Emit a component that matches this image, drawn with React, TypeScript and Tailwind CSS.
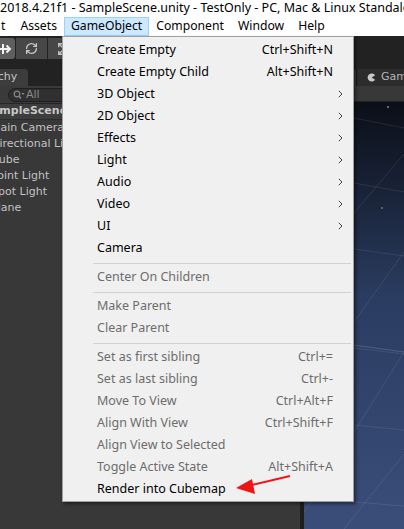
import React from 'react';
import { RefreshCw, Expand } from 'lucide-react';

type Entry = { label: string; shortcut?: string; sub?: boolean; disabled?: boolean } | 'sep';

const menu: Entry[] = [
  { label: 'Create Empty', shortcut: 'Ctrl+Shift+N' },
  { label: 'Create Empty Child', shortcut: 'Alt+Shift+N' },
  { label: '3D Object', sub: true },
  { label: '2D Object', sub: true },
  { label: 'Effects', sub: true },
  { label: 'Light', sub: true },
  { label: 'Audio', sub: true },
  { label: 'Video', sub: true },
  { label: 'UI', sub: true },
  { label: 'Camera' },
  'sep',
  { label: 'Center On Children', disabled: true },
  'sep',
  { label: 'Make Parent', disabled: true },
  { label: 'Clear Parent', disabled: true },
  'sep',
  { label: 'Set as first sibling', shortcut: 'Ctrl+=', disabled: true },
  { label: 'Set as last sibling', shortcut: 'Ctrl+-', disabled: true },
  { label: 'Move To View', shortcut: 'Ctrl+Alt+F', disabled: true },
  { label: 'Align With View', shortcut: 'Ctrl+Shift+F', disabled: true },
  { label: 'Align View to Selected', disabled: true },
  { label: 'Toggle Active State', shortcut: 'Alt+Shift+A', disabled: true },
  { label: 'Render into Cubemap' },
];

const children = ['Main Camera', 'Directional Light', 'Cube', 'Point Light', 'Spot Light', 'Plane'];

function Chevron() {
  return (
    <svg width="5" height="8" viewBox="0 0 5 8" className="block">
      <path d="M0.8 0.8 L4 4 L0.8 7.2" fill="none" stroke="#444" strokeWidth="1" />
    </svg>
  );
}

function GameIcon() {
  return (
    <svg width="9" height="9" viewBox="0 0 10 10" className="block shrink-0">
      <path d="M9 2.6 A4.5 4.5 0 1 0 9 7.4 L5.2 5 Z" fill="#c8c8c8" />
    </svg>
  );
}

function MoveIcon() {
  return (
    <svg width="18" height="14" viewBox="0 0 18 14" className="block">
      <path d="M2 7 H16 M12.5 3.5 L16 7 L12.5 10.5 M9 2 V12" fill="none" stroke="#f2f2f2" strokeWidth="2" />
    </svg>
  );
}

function SceneGrid() {
  return (
    <svg width="100" height="427" viewBox="0 0 100 427" className="block">
      <g stroke="#ffffff" strokeOpacity="0.09" strokeWidth="1" fill="none">
        <line x1="0" y1="6" x2="100" y2="26" />
        <line x1="0" y1="72" x2="100" y2="90" />
        <line x1="0" y1="140" x2="100" y2="154" />
        <line x1="0" y1="240" x2="100" y2="252" />
        <line x1="0" y1="318" x2="100" y2="328" />
        <line x1="0" y1="396" x2="100" y2="404" />
        <line x1="0" y1="170" x2="100" y2="52" />
        <line x1="0" y1="290" x2="100" y2="150" />
        <line x1="0" y1="410" x2="100" y2="250" />
        <line x1="40" y1="427" x2="100" y2="352" />
      </g>
      <line x1="49" y1="243" x2="100" y2="250" stroke="#ffffff" strokeOpacity="0.16" />
      <circle cx="84" cy="5" r="1" fill="#ffffff" fillOpacity="0.5" />
      <circle cx="78" cy="106" r="1" fill="#ffffff" fillOpacity="0.35" />
    </svg>
  );
}

export default function App() {
  const sys = { fontFamily: '"Noto Sans", "Open Sans", sans-serif' };
  const uni = { fontFamily: '"DejaVu Sans", Verdana, sans-serif' };
  return (
    <div className="relative w-[404px] h-[529px] overflow-hidden bg-[#383838]">
      {/* Title bar */}
      <div className="h-[16px] bg-white text-[12.5px] leading-[15px] text-black whitespace-nowrap overflow-hidden" style={sys}>
        2018.4.21f1 - SampleScene.unity - TestOnly - PC, Mac &amp; Linux Standalone
      </div>
      {/* Menu bar */}
      <div className="h-[20px] bg-white flex items-end text-[12.2px] text-black whitespace-nowrap" style={sys}>
        <div className="h-[19px] flex items-center pr-[7px] border border-transparent">t</div>
        <div className="h-[19px] flex items-center px-[6px] border border-transparent">Assets</div>
        <div className="h-[19px] flex items-center px-[6px] border border-[#99d1ff] bg-[#cce8ff]">GameObject</div>
        <div className="h-[19px] flex items-center px-[6px] border border-transparent">Component</div>
        <div className="h-[19px] flex items-center px-[6px] border border-transparent">Window</div>
        <div className="h-[19px] flex items-center px-[6px] border border-transparent">Help</div>
      </div>
      {/* Unity toolbar */}
      <div className="h-[27px] bg-[#222222] flex items-start pt-[2px]">
        <div className="flex gap-[1px] ml-[-17px]">
          <div className="w-[32px] h-[21px] bg-[#5e5e5e] rounded-[3px] flex items-center justify-center pl-[8px]">
            <MoveIcon />
          </div>
          <div className="w-[31px] h-[21px] bg-[#474747] flex items-center justify-center">
            <RefreshCw size={13} color="#c8c8c8" strokeWidth={2.4} />
          </div>
          <div className="w-[32px] h-[21px] bg-[#474747] flex items-center justify-center">
            <Expand size={14} color="#c8c8c8" strokeWidth={2.2} />
          </div>
        </div>
      </div>
      {/* Main area */}
      <div className="flex h-[466px]">
        {/* Hierarchy */}
        <div className="w-[300px] shrink-0 flex flex-col overflow-hidden bg-[#383838]" style={uni}>
          <div className="h-[23px] bg-[#222222] flex items-end">
            <div className="w-[28px] h-[17px] bg-[#3c3c3c] rounded-tr-[3px] overflow-hidden flex items-center">
              <span className="ml-[-36px] text-[11px] text-[#c4c4c4] whitespace-nowrap">Hierarchy</span>
            </div>
          </div>
          <div className="h-[18px] bg-[#3a3a3a] border-b border-[#262626] flex items-center pl-[8px]">
            <div className="h-[14px] w-[280px] rounded-full border border-[#1f1f1f] bg-[#303030] flex items-center pl-[4px] gap-[1px]">
              <svg width="12" height="10" viewBox="0 0 12 10" className="block">
                <circle cx="4" cy="4" r="2.8" fill="none" stroke="#8a8a8a" strokeWidth="1.2" />
                <line x1="6" y1="6" x2="8" y2="8.5" stroke="#8a8a8a" strokeWidth="1.3" />
                <path d="M8.5 3 L11.5 3 L10 5 Z" fill="#8a8a8a" />
              </svg>
              <span className="text-[11px] leading-none text-[#8c8c8c]">All</span>
            </div>
          </div>
          <div className="h-[16px] bg-[#3d3d3d] border-b border-[#2c2c2c] flex items-center whitespace-nowrap">
            <span className="ml-[-16px] text-[11px] font-bold text-[#c8c8c8]">SampleScene</span>
          </div>
          {children.map((c) => (
            <div key={c} className="h-[16px] flex items-center whitespace-nowrap">
              <span className="ml-[-9px] text-[11px] text-[#c2c2c2]">{c}</span>
            </div>
          ))}
        </div>
        <div className="w-[4px] shrink-0 bg-[#1e1e1e]" />
        {/* Scene view */}
        <div className="flex-1 min-w-0 flex flex-col overflow-hidden">
          <div className="h-[23px] bg-[#222222] flex items-end" style={uni}>
            <div className="w-[52px] shrink-0 h-[17px] bg-[#3c3c3c] rounded-t-[3px]" />
            <div className="w-[1px] shrink-0 h-[17px] bg-[#161616]" />
            <div className="flex-1 min-w-0 h-[17px] bg-[#2c2c2c] flex items-center pl-[10px] gap-[5px] whitespace-nowrap overflow-hidden">
              <GameIcon />
              <span className="text-[11px] text-[#b4b4b4]">Game</span>
            </div>
          </div>
          <div className="h-[16px] bg-[#383838] border-b border-[#222]" />
          <div className="flex-1 overflow-hidden bg-linear-to-b from-[#0b0f18] via-[#2a3c60] via-45% to-[#3b4e7a]">
            <SceneGrid />
          </div>
        </div>
      </div>

      {/* GameObject dropdown */}
      <div
        className="absolute left-[62px] top-[36px] w-[292px] bg-[#f0f0f0] border border-[#a0a0a0] pt-[2px] pb-[1px] shadow-[2px_2px_3px_rgba(0,0,0,0.45)] text-[12.5px]"
        style={sys}
      >
        {menu.map((m, i) =>
          m === 'sep' ? (
            <div key={i} className="h-[7px] pt-[4px] ml-[30px] mr-[2px]">
              <div className="h-[1px] bg-[#d2d2d2]" />
            </div>
          ) : (
            <div
              key={i}
              className={`h-[22px] flex items-center pl-[34px] whitespace-nowrap ${m.disabled ? 'text-[#6d6d6d]' : 'text-black'}`}
            >
              <span className="flex-1">{m.label}</span>
              {m.shortcut && <span>{m.shortcut}</span>}
              <div className="w-[20px] h-[22px] flex items-center pl-[5px]">{m.sub && <Chevron />}</div>
            </div>
          )
        )}
      </div>

      {/* Red annotation arrow */}
      <svg className="absolute left-0 top-0 pointer-events-none" width="404" height="529" viewBox="0 0 404 529">
        <line x1="290" y1="476" x2="248" y2="486" stroke="#f01414" strokeWidth="2" />
        <path d="M236 488 L252 479 L255 494 Z" fill="#f01414" />
      </svg>
    </div>
  );
}
